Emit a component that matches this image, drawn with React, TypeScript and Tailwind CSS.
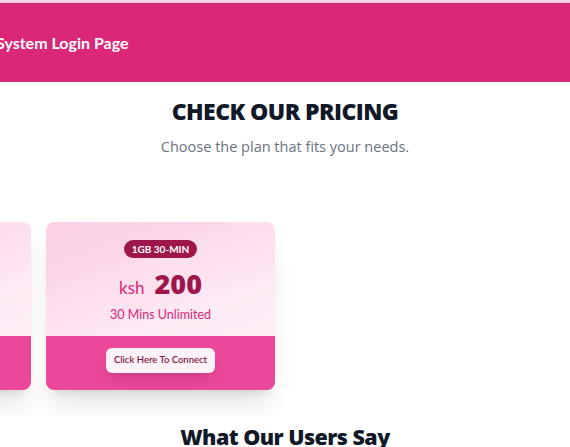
import React from "react";

type Plan = {
  name: string;
  price: string;
  desc: string;
};

const plans: Plan[] = [
  { name: "1GB 10-MIN", price: "100", desc: "10 Mins Unlimited" },
  { name: "1GB 30-MIN", price: "200", desc: "30 Mins Unlimited" },
];

const PlanCard = ({ plan }: { plan: Plan }) => (
  <div className="w-[229px] shrink-0 overflow-hidden rounded-lg shadow-xl">
    <div className="flex h-[114px] flex-col items-center bg-[linear-gradient(160deg,#fbd1e6_0%,#fbd6e9_32%,#fcdeed_38%,#fde3f0_62%,#fdeaf4_70%,#fdeef6_100%)] pt-[18px]">
      <span className="rounded-full bg-[#9d174d] px-[8px] py-[2px] text-[10px] font-bold leading-[14px] text-white">
        {plan.name}
      </span>
      <div className="mt-[9px] flex items-baseline gap-[10px]">
        <span className="text-[17px] text-[#db2777]">ksh</span>
        <span className="font-['Open_Sans',sans-serif] text-[27px] font-extrabold leading-[34px] text-[#9d174d]">
          {plan.price}
        </span>
      </div>
      <p className="mt-[5px] text-[12.5px] text-[#db2777]">{plan.desc}</p>
    </div>
    <div className="flex h-[54px] items-start justify-center bg-[#ec4899] pt-[12px]">
      <button className="rounded-md bg-[#fdf2f8] px-[8px] py-[5px] text-[9.5px] font-semibold text-[#831843] shadow-lg">
        Click Here To Connect
      </button>
    </div>
  </div>
);

export default function App() {
  return (
    <div className="min-h-screen overflow-hidden bg-white font-['Lato','Open_Sans',sans-serif]">
      <header className="border-t-[3px] border-[#f9d3e4] bg-[#db2777]">
        <div className="flex h-[79px] items-center">
          <h1 className="-ml-[66px] whitespace-nowrap text-[16px] font-bold text-white">
            Hotspot System Login Page
          </h1>
        </div>
      </header>

      <section className="flex flex-col items-center pt-[12px] font-['Open_Sans',sans-serif]">
        <h2 className="text-[23px] font-extrabold tracking-tight text-[#111827]">
          CHECK OUR PRICING
        </h2>
        <p className="mt-[7px] text-[14.5px] text-[#6b7280]">
          Choose the plan that fits your needs.
        </p>
      </section>

      <div className="mt-[65px] overflow-hidden pb-[26px]">
        <div className="-ml-[198px] flex gap-[15px]">
          {plans.map((p) => (
            <PlanCard key={p.name} plan={p} />
          ))}
        </div>
      </div>

      <h2 className="mt-[5px] text-center font-['Open_Sans',sans-serif] text-[21.5px] font-extrabold tracking-tight text-[#111827]">
        What Our Users Say
      </h2>
    </div>
  );
}
